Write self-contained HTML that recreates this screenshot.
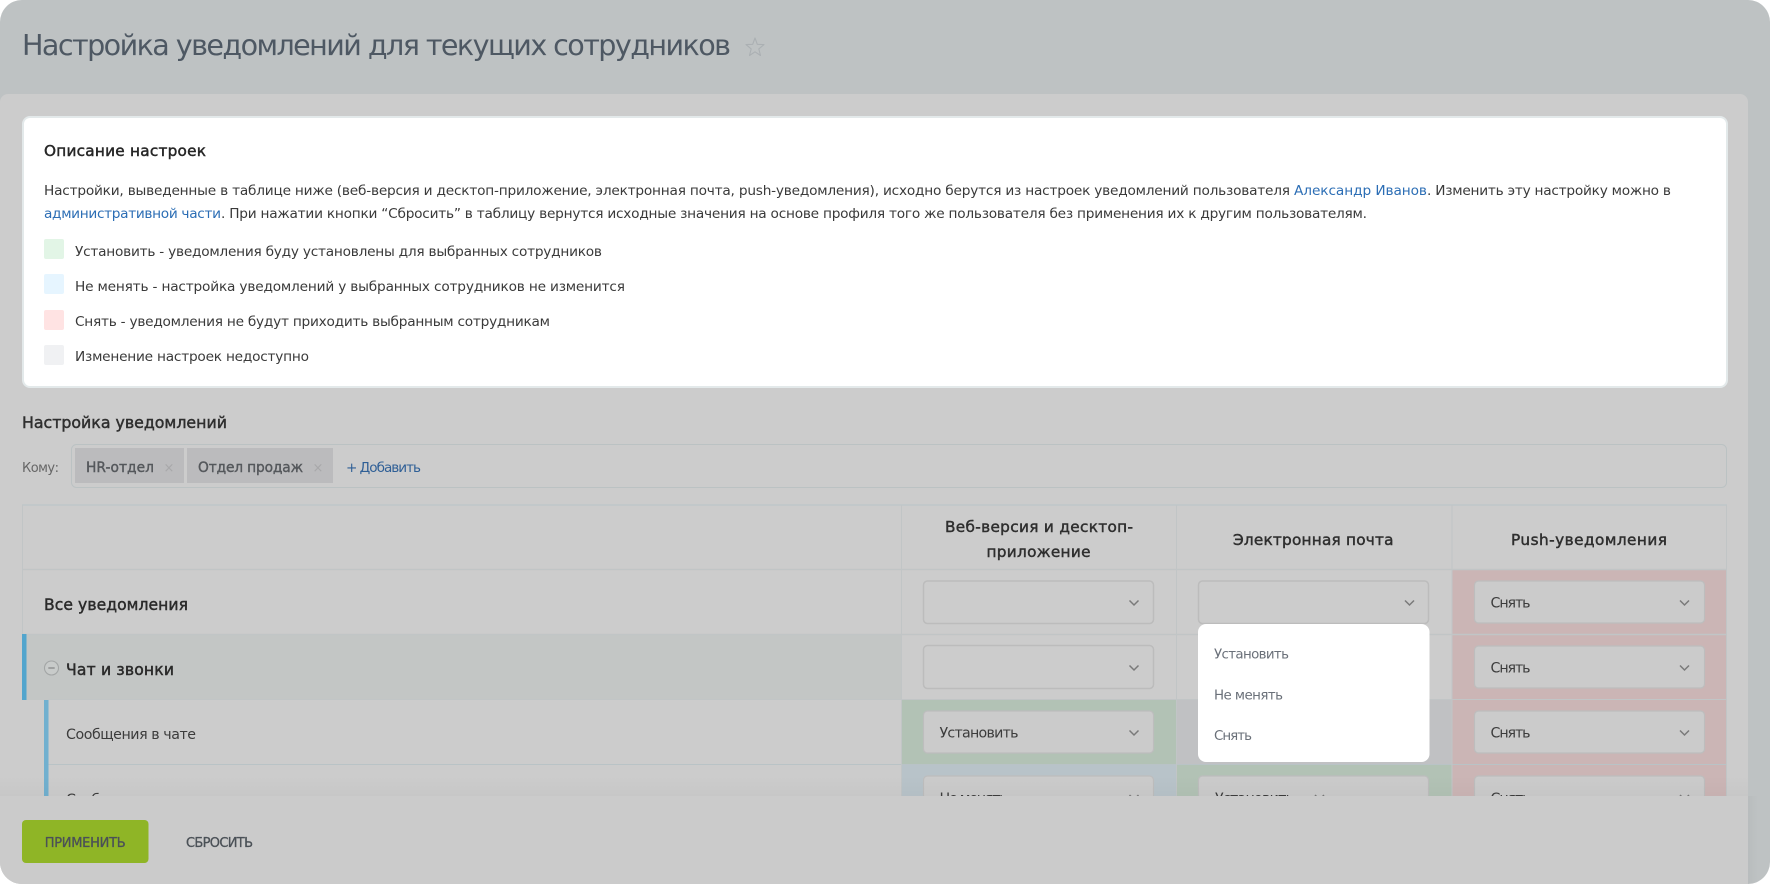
<!DOCTYPE html>
<html lang="ru">
<head>
<meta charset="utf-8">
<title>Настройка уведомлений</title>
<style>
html,body{margin:0;padding:0;background:#fff;width:1770px;height:884px;overflow:hidden}
svg{display:block}
text{font-family:"DejaVu Sans","Liberation Sans",sans-serif;white-space:pre}
.b{font-size:13.7px;fill:#3a3a3a}
.h{font-size:15.3px;fill:#2f2f2f;stroke:#2f2f2f;stroke-width:.45px}
.v{font-size:14.2px;fill:#3c3c3c}
.m{font-size:13.4px;fill:#6a7079}
.sel{fill:#cbcbcb;stroke:#bdbdbd;stroke-width:1.2}
.sel0{fill:#ccc;stroke:#bcbcbc;stroke-width:1.5}
.ch{fill:none;stroke:#7a7a7a;stroke-width:1.5}
.ln{stroke:#c1c5c6;stroke-width:1}
</style>
</head>
<body>
<svg xmlns="http://www.w3.org/2000/svg" width="1770" height="884" viewBox="0 0 1770 884">
<defs>
<linearGradient id="fs" x1="0" y1="0" x2="0" y2="1"><stop offset="0" stop-color="#000" stop-opacity="0"/><stop offset="1" stop-color="#000" stop-opacity=".025"/></linearGradient>
<linearGradient id="fr" x1="0" y1="0" x2="1" y2="0"><stop offset="0" stop-color="#000" stop-opacity=".03"/><stop offset="1" stop-color="#000" stop-opacity="0"/></linearGradient>
</defs>

<!-- outer shell -->
<rect x="0" y="0" width="1770" height="884" rx="22" fill="#bec2c3"/>
<text x="22" y="55" font-size="28.6" fill="#4e5863" textLength="709">Настройка уведомлений для текущих сотрудников</text>
<path d="M755 38L757.3 44.3L764 44.6L758.8 48.9L760.5 55.5L755 51.8L749.5 55.5L751.2 48.9L746 44.6L752.7 44.3Z" fill="none" stroke="#abb0b3" stroke-width="1.1" stroke-linejoin="round"/>

<!-- panel -->
<path d="M0 102a8 8 0 0 1 8-8H1740a8 8 0 0 1 8 8V884H22a22 22 0 0 1-22-22Z" fill="#ccc"/>

<!-- description card -->
<rect x="23" y="117" width="1704" height="270" rx="7" fill="#fff" stroke="#e3e9ea" stroke-width="2"/>
<text x="44" y="156" font-size="15.3" fill="#262626" stroke="#262626" stroke-width=".45" textLength="162">Описание настроек</text>
<text class="b" x="44" y="195" textLength="1246">Настройки, выведенные в таблице ниже (веб-версия и десктоп-приложение, электронная почта, push-уведомления), исходно берутся из настроек уведомлений пользователя</text>
<text class="b" x="1294" y="195" style="fill:#2c6eb5" textLength="133">Александр Иванов</text>
<text class="b" x="1427" y="195" textLength="244">. Изменить эту настройку можно в</text>
<text class="b" x="44" y="218" style="fill:#2c6eb5" textLength="177">административной части</text>
<text class="b" x="221" y="218" textLength="1146">. При нажатии кнопки “Сбросить” в таблицу вернутся исходные значения на основе профиля того же пользователя без применения их к другим пользователям.</text>
<rect x="44" y="239" width="20" height="20" rx="2" fill="#e2f5e6"/>
<text class="b" x="75" y="256" textLength="527">Установить - уведомления буду установлены для выбранных сотрудников</text>
<rect x="44" y="274" width="20" height="20" rx="2" fill="#e6f5ff"/>
<text class="b" x="75" y="291" textLength="550">Не менять - настройка уведомлений у выбранных сотрудников не изменится</text>
<rect x="44" y="310" width="20" height="20" rx="2" fill="#ffe3e3"/>
<text class="b" x="75" y="326" textLength="475">Снять - уведомления не будут приходить выбранным сотрудникам</text>
<rect x="44" y="345" width="20" height="20" rx="2" fill="#f0f1f3"/>
<text class="b" x="75" y="361" textLength="234">Изменение настроек недоступно</text>

<!-- recipients -->
<text x="22" y="428" font-size="15.8" fill="#2f2f2f" stroke="#2f2f2f" stroke-width=".45" textLength="205">Настройка уведомлений</text>
<text x="22" y="472" font-size="13" fill="#666" textLength="37">Кому:</text>
<rect x="71.5" y="444.5" width="1655" height="43" rx="5" fill="#ccc" stroke="#bbc2c3"/>
<rect x="75" y="448" width="109" height="35" fill="#bbbbbd"/>
<text x="86" y="472" font-size="13.8" fill="#55585c" stroke="#55585c" stroke-width=".4" textLength="68">HR-отдел</text>
<text x="169" y="472" font-size="13" fill="#a8a8aa" text-anchor="middle">×</text>
<rect x="187" y="448" width="146" height="35" fill="#bbbbbd"/>
<text x="198" y="472" font-size="13.8" fill="#55585c" stroke="#55585c" stroke-width=".4" textLength="105">Отдел продаж</text>
<text x="318" y="472" font-size="13" fill="#a8a8aa" text-anchor="middle">×</text>
<text x="346" y="472" font-size="13.6" fill="#2f5f96" textLength="75">+ Добавить</text>

<!-- table fills -->
<rect x="22" y="635" width="880" height="65" fill="#c3c6c5"/>
<rect x="902" y="700" width="275" height="65" fill="#b2c2b5"/>
<rect x="902" y="765" width="275" height="40" fill="#b8c3c9"/>
<rect x="1177" y="700" width="275" height="65" fill="#c0c1c3"/>
<rect x="1177" y="765" width="275" height="40" fill="#b2c2b5"/>
<rect x="1452" y="570" width="275" height="235" fill="#cbb5b5"/>

<!-- table lines -->
<rect x="22" y="504" width="1705" height="2" fill="#c2c8ca"/>
<line class="ln" x1="22" y1="569.5" x2="1727" y2="569.5" style="stroke-width:1.5"/>
<line class="ln" x1="22" y1="634.5" x2="1727" y2="634.5" style="stroke-width:1.5"/>
<line class="ln" x1="48" y1="699.5" x2="1727" y2="699.5"/>
<line class="ln" x1="48" y1="764.5" x2="1727" y2="764.5" style="stroke:#b9c3c6"/>
<line class="ln" x1="22.5" y1="505" x2="22.5" y2="635"/>
<line class="ln" x1="901.5" y1="505" x2="901.5" y2="796"/>
<line class="ln" x1="1176.5" y1="505" x2="1176.5" y2="796"/>
<line class="ln" x1="1452" y1="505" x2="1452" y2="796"/>
<line class="ln" x1="1726.5" y1="505" x2="1726.5" y2="796"/>
<rect x="22" y="634" width="4.5" height="66" fill="#52a5cd"/>
<rect x="44" y="700" width="4.5" height="96" fill="#71b0cf"/>

<!-- table header -->
<text class="h" x="945" y="532" textLength="188">Веб-версия и десктоп-</text>
<text class="h" x="986.5" y="557" textLength="104">приложение</text>
<text class="h" x="1233" y="545" textLength="160.5">Электронная почта</text>
<text class="h" x="1511" y="545" textLength="156">Push-уведомления</text>

<!-- row labels -->
<text x="44" y="610" font-size="15.6" fill="#2b2b2b" stroke="#2b2b2b" stroke-width=".45" textLength="144">Все уведомления</text>
<circle cx="51.5" cy="668" r="7" fill="#c8cbca" stroke="#a3a6a6" stroke-width="1.1"/>
<line x1="48.3" y1="668" x2="54.7" y2="668" stroke="#949696" stroke-width="1.6"/>
<text x="66" y="675" font-size="15.6" fill="#2b2b2b" stroke="#2b2b2b" stroke-width=".45" textLength="108">Чат и звонки</text>
<text class="v" x="66" y="739" textLength="130">Сообщения в чате</text>
<text class="v" x="66" y="804" textLength="207">Сообщения в открытых чатах</text>

<!-- selects col 1 -->
<rect class="sel0" x="923.5" y="581" width="230" height="42.5" rx="4"/>
<path class="ch" d="M1129.5 600.5L1134 605L1138.5 600.5"/>
<rect class="sel0" x="923.5" y="645.5" width="230" height="43" rx="4"/>
<path class="ch" d="M1129.5 665.5L1134 670L1138.5 665.5"/>
<rect class="sel" x="923.5" y="711" width="230" height="42" rx="4"/>
<text class="v" x="939.5" y="737.5" textLength="79">Установить</text>
<path class="ch" d="M1129.5 730.5L1134 735L1138.5 730.5"/>
<rect class="sel" x="923.5" y="776" width="230" height="42" rx="4"/>
<text class="v" x="939.5" y="803" textLength="68">Не менять</text>
<path class="ch" d="M1129.5 795L1134 799.5L1138.5 795"/>

<!-- selects col 2 -->
<rect class="sel0" x="1198.5" y="581" width="230" height="42.5" rx="4"/>
<path class="ch" d="M1405 600.5L1409.5 605L1414 600.5"/>
<rect class="sel" x="1198.5" y="776" width="230" height="42" rx="4"/>
<text class="v" x="1215" y="803" textLength="79">Установить</text>
<path class="ch" d="M1315 795L1319.5 799.5L1324 795"/>

<!-- selects col 3 -->
<rect class="sel" x="1474.5" y="581" width="230" height="42" rx="4"/>
<text class="v" x="1490.5" y="607.5" textLength="40">Снять</text>
<path class="ch" d="M1680 600.5L1684.5 605L1689 600.5"/>
<rect class="sel" x="1474.5" y="646" width="230" height="42" rx="4"/>
<text class="v" x="1490.5" y="672.5" textLength="40">Снять</text>
<path class="ch" d="M1680 665.5L1684.5 670L1689 665.5"/>
<rect class="sel" x="1474.5" y="711" width="230" height="42" rx="4"/>
<text class="v" x="1490.5" y="737.5" textLength="40">Снять</text>
<path class="ch" d="M1680 730.5L1684.5 735L1689 730.5"/>
<rect class="sel" x="1474.5" y="776" width="230" height="42" rx="4"/>
<text class="v" x="1490.5" y="803" textLength="40">Снять</text>
<path class="ch" d="M1680 795L1684.5 799.5L1689 795"/>

<!-- footer -->
<rect x="0" y="776" width="1748" height="20" fill="url(#fs)"/>
<path d="M0 796H1748V884H22a22 22 0 0 1-22-22Z" fill="#cbcbcb"/>
<rect x="1748" y="796" width="10" height="88" fill="url(#fr)"/>
<rect x="22" y="820" width="126.5" height="43" rx="4" fill="#8fb526"/>
<text x="44.7" y="847" font-size="13" fill="#4b5157" stroke="#4b5157" stroke-width=".3" textLength="81">ПРИМЕНИТЬ</text>
<text x="186" y="847" font-size="13" fill="#4b5157" stroke="#4b5157" stroke-width=".3" textLength="67">СБРОСИТЬ</text>

<!-- dropdown -->
<rect x="1198" y="624" width="231.5" height="138" rx="8" fill="#fff"/>
<text class="m" x="1214" y="658.5" textLength="75">Установить</text>
<text class="m" x="1214" y="699.5" textLength="69">Не менять</text>
<text class="m" x="1214" y="740" textLength="38">Снять</text>
</svg>
</body>
</html>
